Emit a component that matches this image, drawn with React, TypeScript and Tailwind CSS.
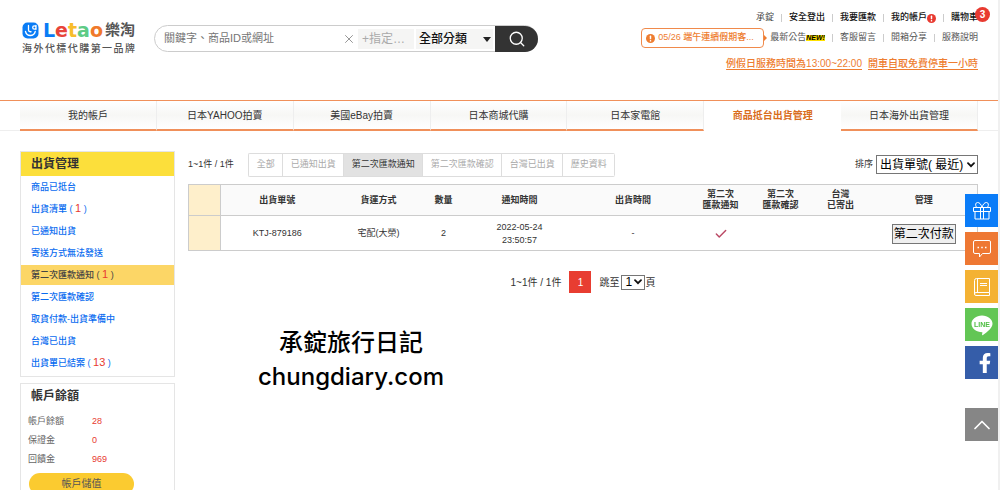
import { Fragment } from "react";
import type { ReactNode } from "react";
import { Check, ChevronUp, Search, X } from "lucide-react";
import { FaFacebookF } from "react-icons/fa";

const mainTabs = [
  { label: "我的帳戶" },
  { label: "日本YAHOO拍賣" },
  { label: "美國eBay拍賣" },
  { label: "日本商城代購" },
  { label: "日本家電館" },
  { label: "商品抵台出貨管理", active: true },
  { label: "日本海外出貨管理" },
];

const shippingMenu = [
  { label: "商品已抵台" },
  { label: "出貨清單", count: 1 },
  { label: "已通知出貨" },
  { label: "寄送方式無法發送" },
  { label: "第二次匯款通知", count: 1, active: true },
  { label: "第二次匯款確認" },
  { label: "取貨付款-出貨準備中" },
  { label: "台灣已出貨" },
  { label: "出貨單已結案", count: 13 },
];

const balances = [
  { label: "帳戶餘額", value: 28 },
  { label: "保證金", value: 0 },
  { label: "回饋金", value: 969 },
];

const filters = ["全部", "已通知出貨", "第二次匯款通知", "第二次匯款確認", "台灣已出貨", "歷史資料"];

const Separated = ({ items }: { items: ReactNode[] }) => (
  <>
    {items.map((item, i) => (
      <Fragment key={i}>
        {i > 0 && <span className="mx-[7px] h-2 w-px bg-[#ccc]" />}
        {item}
      </Fragment>
    ))}
  </>
);

const AlertDot = () => (
  <svg viewBox="0 0 10 10" className="size-[9px] shrink-0" aria-hidden="true">
    <circle cx="5" cy="5" r="5" fill="currentColor" />
    <rect x="4.2" y="1.8" width="1.6" height="4" rx="0.6" fill="#fff" />
    <rect x="4.2" y="6.7" width="1.6" height="1.6" rx="0.6" fill="#fff" />
  </svg>
);

const SelectArrow = () => (
  <svg viewBox="0 0 8 6" className="pointer-events-none absolute top-1/2 right-[3px] h-1.5 w-2 -translate-y-1/2" aria-hidden="true">
    <path d="M1 1.200l3 3l3-3" fill="none" stroke="#111" strokeWidth="1.800" strokeLinecap="round" />
  </svg>
);

const Logo = () => (
  <a href="#home" className="block w-[113px] text-[#555]">
    <span className="flex h-5 items-center whitespace-nowrap">
      <svg viewBox="0 0 34 34" className="mr-1 size-[17px] shrink-0" aria-hidden="true">
        <rect x="1" y="1" width="32" height="32" rx="10" fill="#0a7cf5" />
        <path
          d="M13 7v9q0 3.500 3.500 3.500H18M28 7v7.500M28 11a3.300 3.300 0 1 0-6.600 0a3.300 3.300 0 0 0 6.600 0M7 19q2 8 9.500 8q8 0 10-8"
          fill="none"
          stroke="#fff"
          strokeWidth="2.600"
          strokeLinecap="round"
          strokeLinejoin="round"
        />
      </svg>
      <span className="font-['DejaVu_Sans'] text-[19px] leading-5 font-bold">
        <span className="text-[#0a7cf5]">L</span>
        <span className="text-[#e8443a]">e</span>
        <span className="text-[#f8bd2c]">t</span>
        <span className="text-[#5ecb86]">a</span>
        <span className="text-[#f0792b]">o</span>
      </span>
      <span className="ml-0.5 text-[15px] leading-5 font-bold">樂淘</span>
    </span>
    <span className="mt-[3px] flex justify-between text-[10px] leading-3 font-medium">
      {[..."海外代標代購第一品牌"].map((char, i) => (
        <span key={i}>{char}</span>
      ))}
    </span>
  </a>
);

const SearchBar = () => (
  <form className="flex h-[27px] w-[384px] items-center rounded-full border border-[#ccc] bg-white">
    <input
      type="text"
      aria-label="搜尋"
      placeholder="關鍵字、商品ID或網址"
      className="min-w-0 flex-1 pl-[9px] text-[11px] placeholder:text-[#757575] focus:outline-none"
    />
    <button type="button" aria-label="清除" className="mr-0.5 text-[#888]">
      <X className="size-[14px]" strokeWidth={1.5} />
    </button>
    <input
      type="text"
      aria-label="指定賣家"
      placeholder="+指定…"
      className="h-5 w-14 bg-[#f5f5f4] pl-1 text-[12px] placeholder:text-[#aaa] focus:outline-none"
    />
    <div className="relative mr-0.5 ml-0.5 w-[77px]">
      <select
        aria-label="分類"
        className="block h-5 w-full appearance-none bg-[#f5f5f4] pl-[3px] text-[12px] font-medium text-[#111]"
      >
        <option>全部分類</option>
      </select>
      <svg viewBox="0 0 8 5" className="pointer-events-none absolute top-2 right-0.5 h-[5px] w-2" aria-hidden="true">
        <path d="M0 0h8L4 5z" fill="#222" />
      </svg>
    </div>
    <button
      type="submit"
      aria-label="送出"
      className="-mr-px flex h-[26px] w-[43px] items-center justify-center rounded-r-full bg-[#333] text-white"
    >
      <Search className="size-[18px]" strokeWidth={1.75} />
    </button>
  </form>
);

const TopLinks = () => (
  <div className="flex flex-col items-end pt-[11px] text-[9px]">
    <div className="relative flex h-[14px] items-center text-[#111]">
      <Separated
        items={[
          <span className="text-[#444]">承錠</span>,
          <a href="#logout" className="font-medium">安全登出</a>,
          <a href="#remit" className="font-medium">我要匯款</a>,
          <a href="#account" className="flex items-center font-medium">
            我的帳戶
            <span className="text-[#e83a30]"><AlertDot /></span>
          </a>,
          <a href="#cart" className="font-medium">購物車</a>,
        ]}
      />
      <span className="absolute -top-1 -right-3 flex size-[15px] items-center justify-center rounded-full bg-[#e83a30] text-[10px] font-bold text-white">
        3
      </span>
    </div>
    <div className="mt-[3px] flex items-center text-[#555]">
      <a
        href="#notice"
        className="flex h-5 w-[123px] items-center gap-[3px] rounded-[4px] border border-[#f08a4b] px-1 font-medium text-[#ee7d30]"
      >
        <AlertDot />
        <span className="whitespace-nowrap">05/26 端午連續假期客...</span>
      </a>
      <svg viewBox="0 0 3 6" className="mr-[3px] h-1.5 w-[3px]" aria-hidden="true">
        <path d="M0 0l3 3l-3 3z" fill="#ee7d30" />
      </svg>
      <Separated
        items={[
          <a href="#news" className="flex items-center">
            最新公告
            <span className="bg-[#ffe100] text-[7px] leading-[6px] font-black text-black italic">NEW!</span>
          </a>,
          <a href="#support">客服留言</a>,
          <a href="#unboxing">開箱分享</a>,
          <a href="#help">服務說明</a>,
        ]}
      />
    </div>
    <div className="mt-2 flex gap-1.5 text-[10px] leading-4 font-medium text-[#ee7d30]">
      <a href="#hours" className="underline underline-offset-2">例假日服務時間為13:00~22:00</a>
      <a href="#parking" className="underline underline-offset-2">開車自取免費停車一小時</a>
    </div>
  </div>
);

const MainNav = () => (
  <nav className="border-t border-t-[#f0905a] px-5 shadow-[inset_0_-1px_0_#eee]">
    <ul className="flex">
      {mainTabs.map((tab) => (
        <li key={tab.label} className="flex-1 bg-white">
          <a
            href="#tab"
            className={
              tab.active
                ? "flex h-[30px] items-center justify-center pb-0.5 text-[10px] font-bold text-[#d96d1c]"
                : "flex h-[30px] items-center justify-center border-r border-b-2 border-r-[#eee] border-b-[#f0905a] bg-linear-to-b from-white via-[#f7f7f5] to-white text-[10px] text-[#333]"
            }
          >
            {tab.label}
          </a>
        </li>
      ))}
    </ul>
  </nav>
);

const Sidebar = () => (
  <aside className="w-[155px] shrink-0">
    <section className="border border-[#e5e5e5] pb-0.5">
      <h2 className="bg-[#fcdf3b] pl-2.5 text-[12px] leading-6 font-bold text-[#333]">出貨管理</h2>
      <ul>
        {shippingMenu.map((item) => (
          <li key={item.label} className="py-px">
            <a
              href="#menu"
              className={
                item.active
                  ? "block bg-[#fcd666] pl-2.5 text-[9px] leading-5 font-medium text-[#444]"
                  : "block pl-2.5 text-[9px] leading-5 font-medium text-[#0a6cf0]"
              }
            >
              {item.label}
              {item.count !== undefined && (
                <>
                  {" ( "}
                  <span className="text-[11px] leading-3 text-[#e83a30]">{item.count}</span>
                  {" )"}
                </>
              )}
            </a>
          </li>
        ))}
      </ul>
    </section>

    <section className="mt-1.5 border border-[#e5e5e5] pb-3">
      <h2 className="pl-2.5 text-[12px] leading-6 font-bold text-[#333]">帳戶餘額</h2>
      <dl className="mt-1 pl-[7px] text-[9px] leading-[19px]">
        {balances.map((row) => (
          <div key={row.label} className="flex">
            <dt className="w-16 text-[#666]">{row.label}</dt>
            <dd className="text-[#e83a30]">{row.value}</dd>
          </div>
        ))}
      </dl>
      <button type="button" className="mt-1 ml-2 h-[22px] w-[105px] rounded-full bg-[#fbcb30] text-[10px] leading-3 text-[#555]">
        帳戶儲值
      </button>
    </section>
  </aside>
);

const ShipmentTable = () => (
  <table className="mt-2 w-full table-fixed border border-[#ccc] text-center text-[9px] text-[#333]">
    <colgroup>
      <col className="w-8" />
      <col className="w-[113px]" />
      <col className="w-[90px]" />
      <col className="w-10" />
      <col className="w-[112px]" />
      <col />
      <col className="w-[60px]" />
      <col className="w-[60px]" />
      <col className="w-[60px]" />
      <col className="w-[107px]" />
    </colgroup>
    <thead>
      <tr className="h-[31px] border-b border-[#ccc] bg-[#fafafa] leading-[11px]">
        <td className="border-r border-[#ccc] bg-[#feefcb]" />
        <th>出貨單號</th>
        <th>貨運方式</th>
        <th>數量</th>
        <th>通知時間</th>
        <th>出貨時間</th>
        <th>第二次<br />匯款通知</th>
        <th>第二次<br />匯款確認</th>
        <th>台灣<br />已寄出</th>
        <th>管理</th>
      </tr>
    </thead>
    <tbody>
      <tr className="h-[35px] *:pt-0.5">
        <td className="border-r border-[#ccc] bg-[#feefcb]" />
        <td>KTJ-879186</td>
        <td>宅配(大榮)</td>
        <td>2</td>
        <td className="leading-[13px]">2022-05-24<br />23:50:57</td>
        <td>-</td>
        <td>
          <Check className="mx-auto size-[14px] text-[#bb4a66]" strokeWidth={2.5} aria-label="已通知" />
        </td>
        <td />
        <td />
        <td>
          <button type="button" className="h-5 border border-[#767676] bg-[#efefef] px-px text-[12px] leading-[18px] text-black">
            第二次付款
          </button>
        </td>
      </tr>
    </tbody>
  </table>
);

const Pagination = () => (
  <div className="mt-5 flex items-center justify-center text-[10px] text-[#333]">
    <span>1~1件 / 1件</span>
    <a href="#page-1" className="mx-2 flex size-[22px] items-center justify-center bg-[#e83d31] text-white">1</a>
    <label htmlFor="jump" className="mr-0.5">跳至</label>
    <div className="relative">
      <select
        id="jump"
        className="block h-[15px] w-6 appearance-none border border-[#767676] pl-[3px] text-[12px] leading-3 text-black"
      >
        <option>1</option>
      </select>
      <SelectArrow />
    </div>
    <span>頁</span>
  </div>
);

const FloatingButtons = () => (
  <div className="fixed top-[194px] right-0.5 flex w-[33px] flex-col gap-[5px] text-white">
    <a href="#gift" aria-label="好禮" className="flex h-[33px] items-center justify-center bg-[#0a7cf8]">
      <svg viewBox="0 0 20 20" className="size-5" fill="none" stroke="currentColor" strokeWidth="1" aria-hidden="true">
        <path d="M1.500 6.500h17v4h-17zM3 10.500v7.500h14v-7.500M8.500 6.500v11.500M11.500 6.500v11.500M10 6.500C9 3 7.500 1.500 5.500 1.500S3 4 4.500 6.500M10 6.500C11 3 12.500 1.500 14.500 1.500S17 4 15.500 6.500" />
      </svg>
    </a>
    <a href="#chat" aria-label="留言" className="flex h-[33px] items-center justify-center bg-[#ee7833]">
      <svg viewBox="0 0 20 20" className="size-5" fill="none" stroke="currentColor" strokeWidth="1" aria-hidden="true">
        <path d="M3 1.500h14a1.500 1.500 0 0 1 1.500 1.500v10a1.500 1.500 0 0 1-1.500 1.500h-6.500l-3 3.500v-3.500H3a1.500 1.500 0 0 1-1.500-1.500V3A1.500 1.500 0 0 1 3 1.500z" />
        <path d="M5.500 8.500h1.500M9.250 8.500h1.500M13 8.500h1.500" strokeWidth="1.500" />
      </svg>
    </a>
    <a href="#guide" aria-label="教學" className="flex h-[33px] items-center justify-center bg-[#f4b233]">
      <svg viewBox="0 0 20 20" className="size-5" fill="none" stroke="currentColor" strokeWidth="1" aria-hidden="true">
        <path d="M17.500 15.500V1.500H4.500a2 2 0 0 0-2 2V17a1.500 1.500 0 0 0 1.500 1.500h13.500v-3H4a1.500 1.500 0 0 0-1.500 1.500M5.500 1.500v14M8 6.500h7M8 8.500h7" />
      </svg>
    </a>
    <a href="#line" aria-label="LINE" className="flex h-[33px] items-center justify-center bg-[#63c655]">
      <svg viewBox="0 0 22 22" className="size-[22px]" aria-hidden="true">
        <path d="M11 1.500c5.800 0 10.500 3.700 10.500 8.300c0 4.200-4.900 7.900-9.500 11.200c-.8.500-1 .2-.9-.6l.3-2.200C5.200 18.200.5 14.400.5 9.800C.5 5.200 5.200 1.500 11 1.500z" fill="#fff" />
        <text x="11" y="12.500" textAnchor="middle" fill="#4fbf43" className="font-['Liberation_Sans'] text-[7px] font-bold">
          LINE
        </text>
      </svg>
    </a>
    <a href="#facebook" aria-label="Facebook" className="flex h-[33px] items-end justify-center bg-[#355da9] pb-1.5 pl-1.5">
      <FaFacebookF className="size-5" />
    </a>
    <a href="#top" aria-label="回到頂端" className="mt-6 flex h-[33px] items-center justify-center bg-[#868686]">
      <ChevronUp className="size-7" strokeWidth={1.5} />
    </a>
  </div>
);

const App = () => {
  return (
    <div className="min-h-screen border-r-2 border-[#f0f0f0] bg-white font-['Liberation_Sans','Noto_Sans_CJK_TC',sans-serif] text-[#333]">
      <header className="flex h-[100px] items-start px-5 pl-[22px]">
        <div className="pt-5">
          <Logo />
        </div>
        <div className="ml-[19px] pt-[25px]">
          <SearchBar />
        </div>
        <div className="ml-auto">
          <TopLinks />
        </div>
      </header>

      <MainNav />

      <div className="flex gap-[13px] px-5 pt-5">
        <Sidebar />
        <main className="min-w-0 flex-1">
          <div className="flex h-[25px] items-center pt-0.5 text-[9px]">
            <span className="mr-[14px]">1~1件 / 1件</span>
            <div className="flex overflow-hidden rounded-[2px] border-y border-l border-[#ddd]">
              {filters.map((name, i) => (
                <button
                  key={name}
                  type="button"
                  className={
                    i === 2
                      ? "h-[22px] border-r border-[#ddd] bg-[#e2e2e2] pr-[7px] pl-2 text-[#333]"
                      : "h-[22px] border-r border-[#ddd] bg-white pr-[7px] pl-2 text-[#aaa]"
                  }
                >
                  {name}
                </button>
              ))}
            </div>
            <label htmlFor="sort" className="mr-[3px] ml-auto">排序</label>
            <div className="relative">
              <select
                id="sort"
                className="block h-[19px] w-[102px] appearance-none border border-[#767676] pl-[3px] text-[12px] leading-4 text-black"
              >
                <option>出貨單號( 最近)</option>
              </select>
              <SelectArrow />
            </div>
          </div>
          <ShipmentTable />
          <Pagination />
          <div className="mt-[33px] ml-[70px] w-fit text-center font-['Inter','Noto_Sans_CJK_TC',sans-serif] text-[24px] leading-[34px] font-medium text-black">
            <p>承錠旅行日記</p>
            <p>chungdiary.com</p>
          </div>
        </main>
      </div>

      <FloatingButtons />
    </div>
  );
};

export default App;
